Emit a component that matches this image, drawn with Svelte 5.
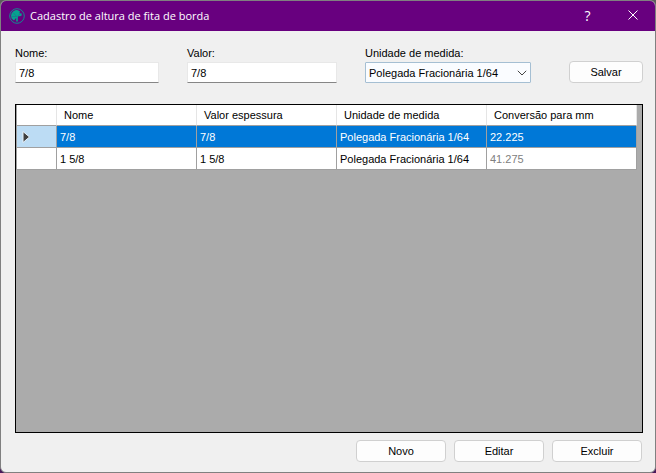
<script lang="ts">
    type Row = {
        nome: string;
        valor: string;
        unidade: string;
        mm: string;
    };

    const unidades = ["Polegada Fracionária 1/64", "Milímetro"];

    let rows: Row[] = $state([
        { nome: "7/8", valor: "7/8", unidade: unidades[0], mm: "22.225" },
        { nome: "1 5/8", valor: "1 5/8", unidade: unidades[0], mm: "41.275" },
    ]);
    let selected = $state(0);
    let nome = $state("7/8");
    let valor = $state("7/8");
    let unidade = $state(unidades[0]);

    // Convert "1 5/8" style values (inches) to millimetres
    function toMm(text: string): string {
        if (unidade !== unidades[0]) return text;
        const inches = text
            .trim()
            .split(/\s+/)
            .reduce((sum, part) => {
                const [a, b] = part.split("/").map(Number);
                return sum + (b ? a / b : a);
            }, 0);
        return String(Number((inches * 25.4).toFixed(3)));
    }

    function select(i: number) {
        selected = i;
        if (!rows[i]) return;
        nome = rows[i].nome;
        valor = rows[i].valor;
        unidade = rows[i].unidade;
    }

    function novo() {
        selected = -1;
        nome = "";
        valor = "";
    }

    function salvar(e: Event) {
        e.preventDefault();
        const row = { nome, valor, unidade, mm: toMm(valor) };
        if (selected >= 0) {
            rows[selected] = row;
        } else {
            rows.push(row);
            selected = rows.length - 1;
        }
    }

    function excluir() {
        rows = rows.filter((_, i) => i !== selected);
        select(0);
    }
</script>

<div class="window">
    <header>
        <svg class="logo" viewBox="0 0 16 16" aria-hidden="true">
            <circle cx="8" cy="8" r="7.3" fill="none" stroke="#14888f" />
            <path
                d="M7.2 13.5V9.8L5 12.4 2.6 10.5 2 8 2.6 5.2 4.6 3 7 2 9 2.2 11 3.4 10.4 5.2 12.8 5.6 12.4 8 9.4 8.2 8.8 9.4 8.8 13.5z"
                fill="#05a38f"
            />
            <path
                d="M7.8 8.5L4 4.6M7.8 8.5L2.5 8.6M8.3 8.3L11 6"
                stroke="#2f5a8c"
                stroke-width="0.5"
            />
        </svg>
        <h1>Cadastro de altura de fita de borda</h1>
        <button class="caption help" aria-label="Ajuda">?</button>
        <button class="caption" aria-label="Fechar">
            <svg width="10" height="10" viewBox="0 0 10 10">
                <path d="M0.5 0.5L9.5 9.5M9.5 0.5L0.5 9.5" stroke="#fff" />
            </svg>
        </button>
    </header>

    <main>
        <form onsubmit={salvar}>
            <div class="field">
                <label for="nome">Nome:</label>
                <input id="nome" type="text" bind:value={nome} />
            </div>
            <div class="field">
                <label for="valor">Valor:</label>
                <input id="valor" type="text" bind:value={valor} />
            </div>
            <div class="field">
                <label for="unidade">Unidade de medida:</label>
                <div class="combo">
                    <select id="unidade" bind:value={unidade}>
                        {#each unidades as u}
                            <option>{u}</option>
                        {/each}
                    </select>
                    <svg width="10" height="6" viewBox="0 0 10 6" aria-hidden="true">
                        <path d="M0.8 0.8L5 5L9.2 0.8" fill="none" stroke="#444" />
                    </svg>
                </div>
            </div>
            <button class="btn save" type="submit">Salvar</button>
        </form>

        <div class="grid">
            <table>
                <colgroup>
                    <col class="c-head" />
                    <col class="c-short" />
                    <col class="c-short" />
                    <col class="c-long" />
                    <col class="c-long" />
                </colgroup>
                <thead>
                    <tr>
                        <th></th>
                        <th>Nome</th>
                        <th>Valor espessura</th>
                        <th>Unidade de medida</th>
                        <th>Conversão para mm</th>
                    </tr>
                </thead>
                <tbody>
                    {#each rows as row, i}
                        <tr class:selected={i === selected} onclick={() => select(i)}>
                            <td class="marker">
                                {#if i === selected}
                                    <svg width="8" height="12" viewBox="0 0 8 12">
                                        <path
                                            d="M1 0.5L7.5 6L1 11.5z"
                                            fill="#404040"
                                            stroke="#e8f2fa"
                                        />
                                    </svg>
                                {/if}
                            </td>
                            <td>{row.nome}</td>
                            <td>{row.valor}</td>
                            <td>{row.unidade}</td>
                            <td class="mm">{row.mm}</td>
                        </tr>
                    {/each}
                </tbody>
            </table>
        </div>

        <footer>
            <button class="btn" onclick={novo}>Novo</button>
            <button class="btn" onclick={() => select(selected)}>Editar</button>
            <button class="btn" onclick={excluir}>Excluir</button>
        </footer>
    </main>
</div>

<style>
    :global(body) {
        background: linear-gradient(#5c5c5c 50%, #4a1a5c 50%);
    }

    .window {
        box-sizing: border-box;
        min-height: 100vh;
        display: flex;
        flex-direction: column;
        border: 1px solid #808080;
        border-radius: 6px;
        overflow: hidden;
        background: #f0f0f0;
        color: #000;
        font: 11px/14px "Liberation Sans", Arial, sans-serif;
    }

    header {
        display: flex;
        align-items: center;
        height: 30px;
        padding-left: 8px;
        background: #68007f;
        color: #fff;
        font-family: "Open Sans", "Noto Sans", sans-serif;
    }

    .logo {
        width: 16px;
        height: 16px;
        margin-right: 5px;
    }

    h1 {
        flex: 1;
        margin: 0;
        font-size: 11px;
        font-weight: 400;
    }

    .caption {
        width: 45px;
        height: 30px;
        padding: 0;
        border: none;
        background: none;
        color: inherit;
        font: inherit;
    }

    .help {
        font-size: 14px;
    }

    main {
        flex: 1;
        display: flex;
        flex-direction: column;
        padding: 15px 12px 10px 14px;
    }

    form {
        display: grid;
        grid-template-columns: 144fr 150fr 166fr 84px;
        column-gap: 28px;
        align-items: end;
        margin-bottom: 21px;
    }

    .field {
        display: flex;
        flex-direction: column;
        gap: 2px;
    }

    input,
    select {
        box-sizing: border-box;
        width: 100%;
        height: 21px;
        color: inherit;
        font: inherit;
    }

    input {
        padding: 0 3px;
        border: 1px solid #e8e8e8;
        border-bottom-color: #868686;
        background: #fff;
    }

    select {
        display: block;
        appearance: none;
        padding: 0 20px 0 3px;
        border: 1px solid #a5bfd3;
        border-radius: 1px;
        background: #fafcff;
    }

    .combo {
        position: relative;
    }

    .combo svg {
        position: absolute;
        right: 4px;
        top: 8px;
        pointer-events: none;
    }

    .btn {
        box-sizing: border-box;
        width: 90px;
        height: 22px;
        padding: 0;
        border: 1px solid #d0d0d0;
        border-radius: 4px;
        background: #fdfdfd;
        color: inherit;
        font: inherit;
    }

    .save {
        width: 74px;
        justify-self: end;
    }

    .grid {
        flex: 1;
        padding-right: 5px;
        border: 1px solid #000;
        background: #ababab;
    }

    table {
        width: 100%;
        table-layout: fixed;
        border-collapse: separate;
        border-spacing: 0;
        border-left: 1px solid #a0a0a0;
    }

    .c-head {
        width: 40px;
    }

    .c-short {
        width: 140px;
    }

    .c-long {
        width: 150px;
    }

    th,
    td {
        box-sizing: border-box;
        height: 22px;
        padding: 0 3px;
        border-right: 1px solid #a0a0a0;
        border-bottom: 1px solid #a0a0a0;
        background: #fff;
        text-align: left;
        font-weight: 400;
        white-space: nowrap;
        overflow: hidden;
    }

    th {
        height: 21px;
        padding-left: 7px;
        border-right-color: #e5e5e5;
    }

    .mm {
        color: #808080;
    }

    .selected td {
        background: #0078d7;
        color: #fff;
    }

    .selected .marker {
        background: #bcdcf4;
    }

    .marker {
        padding-left: 5px;
    }

    .marker svg {
        display: block;
    }

    footer {
        display: flex;
        justify-content: flex-end;
        gap: 8px;
        padding: 7px 1px 0 0;
    }
</style>
